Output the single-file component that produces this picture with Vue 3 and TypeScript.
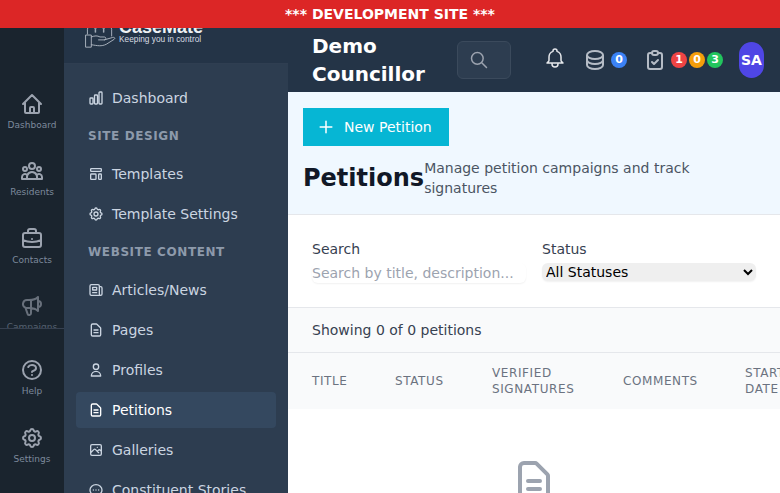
<script setup lang="ts">
interface NavItem { label: string; icon: string; active?: boolean }
const cog = ['M10.325 4.317c.426-1.756 2.924-1.756 3.35 0a1.724 1.724 0 002.573 1.066c1.543-.94 3.31.826 2.37 2.37a1.724 1.724 0 001.065 2.572c1.756.426 1.756 2.924 0 3.35a1.724 1.724 0 00-1.066 2.573c.94 1.543-.826 3.31-2.37 2.37a1.724 1.724 0 00-2.572 1.065c-.426 1.756-2.924 1.756-3.35 0a1.724 1.724 0 00-2.573-1.066c-1.543.94-3.31-.826-2.37-2.37a1.724 1.724 0 00-1.065-2.572c-1.756-.426-1.756-2.924 0-3.35a1.724 1.724 0 001.066-2.573c-.94-1.543.826-3.31 2.37-2.37.996.608 2.296.07 2.572-1.065z', 'M15 12a3 3 0 11-6 0 3 3 0 016 0z']
const docText = 'M9 12h6m-6 4h6m2 5H7a2 2 0 01-2-2V5a2 2 0 012-2h5.586a1 1 0 01.707.293l5.414 5.414a1 1 0 01.293.707V19a2 2 0 01-2 2z'
const railTop = [
  { label: 'Dashboard', paths: ['M3 12l2-2m0 0l7-7 7 7M5 10v10a1 1 0 001 1h3m10-11l2 2m-2-2v10a1 1 0 01-1 1h-3m-6 0a1 1 0 001-1v-4a1 1 0 011-1h2a1 1 0 011 1v4a1 1 0 001 1m-6 0h6'] },
  { label: 'Residents', paths: ['M17 20h5v-2a3 3 0 00-5.356-1.857M17 20H7m10 0v-2c0-.656-.126-1.283-.356-1.857M7 20H2v-2a3 3 0 015.356-1.857M7 20v-2c0-.656.126-1.283.356-1.857m0 0a5.002 5.002 0 019.288 0M15 7a3 3 0 11-6 0 3 3 0 016 0zm6 3a2 2 0 11-4 0 2 2 0 014 0zM7 10a2 2 0 11-4 0 2 2 0 014 0z'] },
  { label: 'Contacts', paths: ['M21 13.255A23.931 23.931 0 0112 15c-3.183 0-6.22-.62-9-1.745M16 6V4a2 2 0 00-2-2h-4a2 2 0 00-2 2v2m4 6h.01M5 20h14a2 2 0 002-2V8a2 2 0 00-2-2H5a2 2 0 00-2 2v10a2 2 0 002 2z'] },
  { label: 'Campaigns', dim: true, paths: ['M11 5.882V19.24a1.76 1.76 0 01-3.417.592l-2.147-6.15M18 13a3 3 0 100-6M5.436 13.683A4.001 4.001 0 017 6h1.832c4.1 0 7.625-1.234 9.168-3v14c-1.543-1.766-5.067-3-9.168-3H7a3.988 3.988 0 01-1.564-.317z'] }
]
const railBottom = [
  { label: 'Help', paths: ['M8.228 9c.549-1.165 2.03-2 3.772-2 2.21 0 4 1.343 4 3 0 1.4-1.278 2.575-3.006 2.907-.542.104-.994.54-.994 1.093m0 3h.01M21 12a9 9 0 11-18 0 9 9 0 0118 0z'] },
  { label: 'Settings', paths: cog }
]
const icons: Record<string, string[]> = {
  chart: ['M3 13.125C3 12.504 3.504 12 4.125 12h2.25c.621 0 1.125.504 1.125 1.125v6.75C7.5 20.496 6.996 21 6.375 21h-2.25A1.125 1.125 0 0 1 3 19.875v-6.75ZM9.75 8.625c0-.621.504-1.125 1.125-1.125h2.25c.621 0 1.125.504 1.125 1.125v11.25c0 .621-.504 1.125-1.125 1.125h-2.25a1.125 1.125 0 0 1-1.125-1.125V8.625ZM16.5 4.125c0-.621.504-1.125 1.125-1.125h2.25C20.496 3 21 3.504 21 4.125v15.75c0 .621-.504 1.125-1.125 1.125h-2.25a1.125 1.125 0 0 1-1.125-1.125V4.125Z'],
  template: ['M4 5a1 1 0 011-1h14a1 1 0 011 1v2a1 1 0 01-1 1H5a1 1 0 01-1-1V5zM4 13a1 1 0 011-1h6a1 1 0 011 1v6a1 1 0 01-1 1H5a1 1 0 01-1-1v-6zM16 13a1 1 0 011-1h2a1 1 0 011 1v6a1 1 0 01-1 1h-2a1 1 0 01-1-1v-6z'],
  gear: cog,
  news: ['M19 20H5a2 2 0 01-2-2V6a2 2 0 012-2h10a2 2 0 012 2v1m2 13a2 2 0 01-2-2V7m2 13a2 2 0 002-2V9a2 2 0 00-2-2h-2m-4-3H9M7 16h6M7 8h6v4H7V8z'],
  doc: [docText],
  user: ['M16 7a4 4 0 11-8 0 4 4 0 018 0zM12 14a7 7 0 00-7 7h14a7 7 0 00-7-7z'],
  image: ['M4 16l4.586-4.586a2 2 0 012.828 0L16 16m-2-2l1.586-1.586a2 2 0 012.828 0L20 14m-6-6h.01M6 20h12a2 2 0 002-2V6a2 2 0 00-2-2H6a2 2 0 00-2 2v12a2 2 0 002 2z'],
  chat: ['M8 12h.01M12 12h.01M16 12h.01M21 12c0 4.418-4.03 8-9 8a9.863 9.863 0 01-4.255-.949L3 20l1.395-3.72C3.512 15.042 3 13.574 3 12c0-4.418 4.03-8 9-8s9 3.582 9 8z']
}
const groups: { heading?: string; items: NavItem[] }[] = [
  { items: [{ label: 'Dashboard', icon: 'chart' }] },
  { heading: 'SITE DESIGN', items: [{ label: 'Templates', icon: 'template' }, { label: 'Template Settings', icon: 'gear' }] },
  { heading: 'WEBSITE CONTENT', items: [
    { label: 'Articles/News', icon: 'news' },
    { label: 'Pages', icon: 'doc' },
    { label: 'Profiles', icon: 'user' },
    { label: 'Petitions', icon: 'doc', active: true },
    { label: 'Galleries', icon: 'image' },
    { label: 'Constituent Stories', icon: 'chat' }
  ] }
]
const columns = [
  { label: 'TITLE', width: 83 },
  { label: 'STATUS', width: 97 },
  { label: 'VERIFIED SIGNATURES', width: 131 },
  { label: 'COMMENTS', width: 122 },
  { label: 'START DATE', width: 90 }
]
const taskCounts = [
  { n: 1, c: 'red' },
  { n: 0, c: 'amber' },
  { n: 3, c: 'green' }
]
</script>

<template>
  <div class="page">
    <div class="banner">*** DEVELOPMENT SITE ***</div>
    <div class="shell">
      <nav class="rail">
        <div class="rail-top">
          <a v-for="r in railTop" :key="r.label" class="rail-item" :class="{ dim: r.dim }">
            <svg class="rail-icon" viewBox="0 0 24 24"><path v-for="p in r.paths" :key="p" :d="p" /></svg>
            <span>{{ r.label }}</span>
          </a>
        </div>
        <div class="rail-bottom">
          <a v-for="r in railBottom" :key="r.label" class="rail-item">
            <svg class="rail-icon" viewBox="0 0 24 24"><path v-for="p in r.paths" :key="p" :d="p" /></svg>
            <span>{{ r.label }}</span>
          </a>
        </div>
      </nav>

      <aside class="side">
        <div class="brand">
          <div class="brand-in">
            <svg class="brand-mark" viewBox="0 0 32 24"><path d="M2.500 10V5a4 4 0 0 1 8 0v3M11 8V5a4 4 0 0 1 8 0v3M19.500 8V5a4 4 0 0 1 8 0v7" /><path d="M1 11h5.500v12.500H1Z" /><path d="M6.500 13c4-1.500 6-1.500 9 0h4.500c2 0 2 3 0 3h-6M20 16l8.500-2.500c2-.5 3 1 1.500 2l-8 5c-5 2.500-9 1.500-15.500.5" /></svg>
            <div class="brand-text">
              <div class="brand-name">CaseMate</div>
              <div class="brand-tag">Keeping you in control</div>
            </div>
          </div>
        </div>
        <div class="side-nav">
          <template v-for="(g, i) in groups" :key="i">
            <div v-if="g.heading" class="side-head">{{ g.heading }}</div>
            <a v-for="it in g.items" :key="it.label" class="side-item" :class="{ active: it.active }">
              <svg class="side-icon" viewBox="0 0 24 24"><path v-for="p in icons[it.icon]" :key="p" :d="p" /></svg>
              <span>{{ it.label }}</span>
            </a>
          </template>
        </div>
      </aside>

      <main class="main">
        <header class="top">
          <div class="top-title">Demo Councillor</div>
          <button class="search-btn" aria-label="Search">
            <svg viewBox="0 0 24 24"><path d="M21 21l-6-6m2-5a7 7 0 11-14 0 7 7 0 0114 0z" /></svg>
          </button>
          <svg class="bell" viewBox="0 0 24 24"><path d="M15 17h5l-1.405-1.405A2.032 2.032 0 0118 14.158V11a6.002 6.002 0 00-4-5.659V5a2 2 0 10-4 0v.341C7.670 6.165 6 8.388 6 11v3.159c0 .538-.214 1.055-.595 1.436L4 17h5m6 0v1a3 3 0 11-6 0v-1m6 0H9" /></svg>
          <div class="stat">
            <svg class="stat-icon" viewBox="0 0 24 24"><path d="M4 7v10c0 2.210 3.582 4 8 4s8-1.790 8-4V7M4 7c0 2.210 3.582 4 8 4s8-1.790 8-4M4 7c0-2.210 3.582-4 8-4s8 1.790 8 4m0 5c0 2.210-3.582 4-8 4s-8-1.790-8-4" /></svg>
            <span class="dot blue">0</span>
          </div>
          <div class="stat">
            <svg class="stat-icon" viewBox="0 0 24 24"><path d="M9 5H7a2 2 0 00-2 2v12a2 2 0 002 2h10a2 2 0 002-2V7a2 2 0 00-2-2h-2M9 5a2 2 0 002 2h2a2 2 0 002-2M9 5a2 2 0 012-2h2a2 2 0 012 2m-6 9l2 2 4-4" /></svg>
            <span class="dots">
              <span v-for="t in taskCounts" :key="t.c" class="dot" :class="t.c">{{ t.n }}</span>
            </span>
          </div>
          <div class="avatar">SA</div>
        </header>

        <section class="head">
          <button class="new-btn"><svg viewBox="0 0 24 24"><path d="M12 5v14M5 12h14" /></svg>New Petition</button>
          <div class="head-row">
            <h1>Petitions</h1>
            <p>Manage petition campaigns and track signatures</p>
          </div>
        </section>

        <section class="filters">
          <label class="field">
            <span>Search</span>
            <input type="text" placeholder="Search by title, description..." />
          </label>
          <label class="field">
            <span>Status</span>
            <select><option>All Statuses</option></select>
          </label>
        </section>

        <div class="count">Showing 0 of 0 petitions</div>

        <div class="thead">
          <div v-for="c in columns" :key="c.label" class="th" :style="{ width: c.width + 'px' }">{{ c.label }}</div>
        </div>

        <div class="empty">
          <svg viewBox="0 0 24 24"><path :d="docText" /></svg>
        </div>
      </main>
    </div>
  </div>
</template>

<style>
html, body { margin: 0; height: 100%; overflow: hidden; }
</style>

<style scoped>
* { box-sizing: border-box; }
.page { width: 780px; height: 493px; overflow: hidden; display: flex; flex-direction: column; font-family: "DejaVu Sans", sans-serif; }
.banner { height: 28px; flex: none; background: #dc2626; color: #fff; font-size: 14px; font-weight: 700; line-height: 28px; text-align: center; }
.shell { flex: 1; display: flex; min-height: 0; }
svg { fill: none; stroke: currentColor; stroke-width: 2; stroke-linecap: round; stroke-linejoin: round; display: block; }

.rail { width: 64px; flex: none; background: #1a242e; display: flex; flex-direction: column; }
.rail-top { height: 303px; overflow: hidden; border-bottom: 1px solid #374151; padding-top: 64px; }
.rail-bottom { padding-top: 29px; }
.rail-item { display: flex; flex-direction: column; align-items: center; height: 67.3px; font-size: 9px; line-height: 12px; color: #7d8a9c; }
.rail-item.dim { opacity: .6; }
.rail-icon { width: 24px; height: 24px; color: #9ca3af; margin-bottom: 3px; flex: none; }

.side { width: 224px; flex: none; background: #2d3d50; display: flex; flex-direction: column; overflow: hidden; }
.brand { height: 36px; flex: none; background: #243447; border-bottom: 1px solid #2f3e51; overflow: hidden; padding-left: 21px; display: flex; align-items: flex-end; padding-bottom: 15px; }
.brand-in { display: flex; align-items: flex-end; gap: 3px; }
.brand-mark { width: 31px; height: 24px; color: #a9b2bd; stroke-width: 1; flex: none; }
.brand-text { font-family: "Liberation Sans", sans-serif; color: #d8dde3; padding-bottom: 4px; }
.brand-name { font-size: 18px; line-height: 13px; font-weight: 700; color: #eef1f4; }
.brand-tag { font-size: 8.300px; line-height: 10px; }
.side-nav { padding: 16px 12px 0; }
.side-item { display: flex; align-items: center; gap: 8px; height: 36px; margin-bottom: 4px; padding-left: 12px; font-size: 14px; color: #cbd5e1; border-radius: 4px; }
.side-item.active { background: #34485f; color: #fff; }
.side-icon { width: 16px; height: 16px; flex: none; }
.side-head { font-size: 12px; font-weight: 700; line-height: 16px; letter-spacing: .6px; color: #8d9aab; padding-left: 12px; margin: 12px 0 12px; height: 16px; }

.main { flex: 1; min-width: 0; display: flex; flex-direction: column; background: #fff; overflow: hidden; }
.top { height: 64px; flex: none; background: #243447; display: flex; align-items: center; padding-left: 24px; }
.top-title { width: 145px; color: #fff; font-size: 20px; font-weight: 700; line-height: 28px; flex: none; }
.search-btn { width: 54px; height: 38px; flex: none; background: #2d3d50; border: 1px solid #3b4a5c; border-radius: 6px; padding: 0 0 0 11px; color: #9ca3af; margin-right: 32px; }
.search-btn svg { width: 20px; height: 20px; stroke-width: 1.800; }
.bell { width: 24px; height: 24px; color: #e5e7eb; flex: none; margin: -4px 16px 0 0; stroke-width: 1.500; }
.stat { display: flex; align-items: center; gap: 4px; flex: none; margin-right: 16px; }
.stat-icon { width: 24px; height: 24px; color: #b5bcc6; }
.dots { display: flex; gap: 2px; }
.dot { width: 16px; height: 16px; border-radius: 50%; color: #fff; font-size: 11px; font-weight: 700; line-height: 16px; text-align: center; display: block; }
.blue { background: #3b82f6; }
.red { background: #ef4444; }
.amber { background: #f59e0b; }
.green { background: #22c55e; }
.avatar { width: 25px; height: 36px; border-radius: 13px; background: #4f46e5; color: #fff; font-size: 14px; font-weight: 700; line-height: 36px; flex: none; white-space: nowrap; display: flex; justify-content: center; }

.head { height: 123px; flex: none; background: #f0f8ff; border-bottom: 1px solid #e5e7eb; padding: 16px 15px 0; }
.new-btn { display: flex; align-items: center; gap: 8px; width: 146px; height: 38px; background: #06b6d4; color: #fff; border: 0; padding: 0 0 0 13px; font: 14px "DejaVu Sans", sans-serif; }
.new-btn svg { width: 20px; height: 20px; stroke-width: 1.800; }
.head-row { display: flex; align-items: center; margin-top: 12px; }
h1 { margin: 0; font-size: 24px; line-height: 32px; font-weight: 700; color: #111827; flex: none; }
p { margin: 0; font-size: 14px; line-height: 20px; color: #4b5563; width: 300px; }

.filters { height: 93px; flex: none; border-bottom: 1px solid #e5e7eb; padding: 26px 24px 0; display: flex; gap: 16px; }
.field { width: 214px; display: flex; flex-direction: column; font-size: 14px; color: #374151; }
.field span { line-height: 17px; margin-bottom: 5px; }
input { width: 214px; height: 20px; border: 0; padding: 0; border-radius: 6px; box-shadow: 0 1px 2px rgba(0,0,0,.06); font: 14px "DejaVu Sans", sans-serif; background: #fff; outline: 0; }
input::placeholder { color: #9ca3af; opacity: 1; }
select { width: 214px; height: 18px; border: 0; padding: 0; border-radius: 6px; box-shadow: 0 1px 2px rgba(0,0,0,.06); font: 14px "DejaVu Sans", sans-serif; background: #efefef; color: #000; outline: 0; }

.count { height: 45px; flex: none; background: #f9fafb; border-bottom: 1px solid #e5e7eb; padding-left: 24px; font-size: 14px; line-height: 44px; color: #374151; }
.thead { height: 56px; flex: none; background: #f9fafb; display: flex; align-items: center; padding-left: 24px; }
.th { flex: none; font-size: 12px; line-height: 16px; letter-spacing: .6px; color: #6b7280; padding-right: 24px; }

.empty { flex: 1; display: flex; justify-content: center; padding-top: 48px; }
.empty svg { width: 48px; height: 48px; color: #9ca3af; flex: none; }
</style>
